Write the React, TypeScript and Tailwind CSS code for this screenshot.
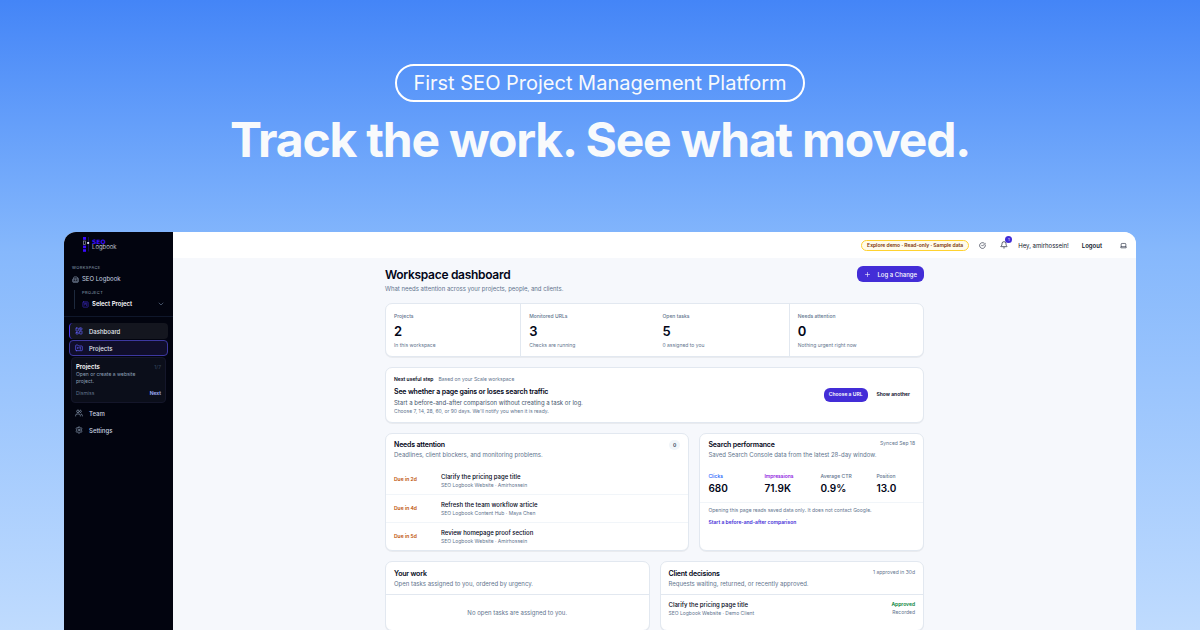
import React from 'react';
import {
  Bell,
  Building2,
  ChevronDown,
  CircleCheckBig,
  FolderKanban,
  Laptop,
  LayoutDashboard,
  Plus,
  Settings,
  SquareKanban,
  Users,
} from 'lucide-react';
import { clsx } from 'clsx';

const stats = [
  { label: 'Projects', value: '2', note: 'In this workspace', divider: false },
  { label: 'Monitored URLs', value: '3', note: 'Checks are running', divider: true },
  { label: 'Open tasks', value: '5', note: '0 assigned to you', divider: false },
  { label: 'Needs attention', value: '0', note: 'Nothing urgent right now', divider: true },
];

const attention = [
  { due: 'Due in 2d', title: 'Clarify the pricing page title', meta: 'SEO Logbook Website · Amirhossein' },
  { due: 'Due in 4d', title: 'Refresh the team workflow article', meta: 'SEO Logbook Content Hub · Maya Chen' },
  { due: 'Due in 5d', title: 'Review homepage proof section', meta: 'SEO Logbook Website · Amirhossein' },
];

const metrics = [
  { label: 'Clicks', value: '680', color: 'text-blue-600' },
  { label: 'Impressions', value: '71.9K', color: 'text-purple-700' },
  { label: 'Average CTR', value: '0.9%', color: 'text-slate-500' },
  { label: 'Position', value: '13.0', color: 'text-slate-500' },
];

function Card({ className, children }: { className?: string; children: React.ReactNode }) {
  return (
    <section className={clsx('min-w-0 rounded-[7px] border border-slate-200 bg-white shadow-2xs', className)}>
      {children}
    </section>
  );
}

function CardHeading({ title, text }: { title: string; text: string }) {
  return (
    <div>
      <h2 className="text-[7px] leading-[10px] font-semibold tracking-tight text-slate-950">{title}</h2>
      <p className="text-[6px] leading-[10px] whitespace-nowrap text-slate-500">{text}</p>
    </div>
  );
}

function Logo() {
  return (
    <a href="#" className="ml-[10px] flex items-center gap-[2px]">
      <svg viewBox="0 0 8 15" className="h-[15px] w-[8px]" fill="#3a0bff">
        <rect x="1" y="0" width="3" height="2.8" />
        <rect x="1.4" y="4" width="2.2" height="3.6" fill="none" stroke="#8b8fa3" strokeWidth="0.7" />
        <rect x="1" y="8.6" width="3" height="2.6" />
        <rect x="1" y="12.2" width="3" height="2.6" />
        <rect x="6" y="0" width="0.8" height="14.4" fill="#1d1468" />
        <rect x="5.2" y="5" width="1.9" height="1.9" fill="#e2e8f0" />
      </svg>
      <span className="flex flex-col">
        <span className="font-['DejaVu_Sans',sans-serif] text-[6px] leading-[5px] font-bold text-[#3a0bff]">SEO</span>
        <span className="text-[6px] leading-[6px] font-light text-slate-200">Logbook</span>
      </span>
    </a>
  );
}

function Sidebar() {
  return (
    <aside className="w-[109px] shrink-0 bg-[#02040f] pt-[5px] text-[6px] text-slate-300">
      <div className="px-2">
        <Logo />
        <p className="mt-[13px] text-[4px] leading-[6px] tracking-widest text-slate-400">WORKSPACE</p>
        <div className="mt-1 flex items-center gap-[3px] leading-[8px]">
          <Building2 className="size-[7px] text-slate-400" />
          SEO Logbook
        </div>
        <div className="mt-[7px] ml-[2px] border-l border-slate-800 pl-[7px]">
          <p className="text-[4px] leading-[6px] tracking-widest text-slate-400">PROJECT</p>
          <button className="mt-[3px] flex w-full items-center gap-[3px] leading-[10px] font-semibold text-white">
            <SquareKanban className="size-[7px] text-indigo-700" />
            Select Project
            <ChevronDown className="ml-auto size-[8px] text-slate-500" />
          </button>
        </div>
      </div>

      <nav className="mt-[7px] border-t border-slate-900 px-[5px] pt-[6px] font-medium">
        <a href="#" className="flex h-4 items-center gap-[6px] rounded-[4px] border-l border-indigo-600 bg-[#14161f] pl-[5px] text-slate-200">
          <LayoutDashboard className="size-2 text-indigo-500" />
          Dashboard
        </a>
        <a href="#" className="mt-px flex h-4 items-center gap-[6px] rounded-[4px] border border-[#3d38a0] bg-[#100e2b] pl-[5px] text-slate-200">
          <FolderKanban className="size-2 text-indigo-500" />
          Projects
        </a>
        <div className="mx-[2px] mt-px rounded-[4px] border border-[#14162a] bg-[#0b0e1a] px-1 pt-[5px] pb-1">
          <div className="flex justify-between leading-[8px]">
            <strong className="font-semibold text-white">Projects</strong>
            <span className="text-[5px] text-slate-700">1/7</span>
          </div>
          <p className="text-[5px] leading-[7px] font-normal text-slate-400">
            Open or create a website
            <br />
            project.
          </p>
          <div className="mt-1 flex justify-between text-[5px] leading-[9px]">
            <button className="font-normal text-slate-500">Dismiss</button>
            <button className="font-semibold text-indigo-300">Next</button>
          </div>
        </div>
        <a href="#" className="mt-[2px] flex h-4 items-center gap-[6px] pl-[6px]">
          <Users className="size-2 text-slate-400" />
          Team
        </a>
        <a href="#" className="mt-px flex h-4 items-center gap-[6px] pl-[6px]">
          <Settings className="size-2 text-slate-400" />
          Settings
        </a>
      </nav>
    </aside>
  );
}

function TopBar() {
  return (
    <header className="flex h-[26px] items-center justify-end bg-white pr-[9px] text-[6px] text-slate-900">
      <span className="rounded-full border border-amber-300 bg-amber-50 px-[5px] text-[5px] leading-[9px] font-semibold text-amber-900">
        Explore demo · Read-only · Sample data
      </span>
      <button aria-label="Checks" className="ml-[10px]">
        <CircleCheckBig className="size-[7px]" />
      </button>
      <button aria-label="Notifications" className="relative ml-[14px]">
        <Bell className="size-[8px]" />
        <span className="absolute -top-[5px] left-[5px] size-[7px] rounded-full bg-indigo-700 text-center text-[4px] leading-[7px] text-white">
          1
        </span>
      </button>
      <span className="ml-[10px]">Hey, amirhossein!</span>
      <button className="ml-[13px] font-semibold">Logout</button>
      <button aria-label="Device theme" className="ml-[18px]">
        <Laptop className="size-[7px]" />
      </button>
    </header>
  );
}

function Dashboard() {
  return (
    <main className="mx-auto w-full max-w-[539px] pt-2">
      <div className="flex items-start justify-between">
        <div>
          <h1 className="text-[12px] leading-[18px] font-semibold tracking-tight text-slate-950">
            Workspace dashboard
          </h1>
          <p className="text-[6px] leading-[10px] text-slate-500">
            What needs attention across your projects, people, and clients.
          </p>
        </div>
        <button className="flex h-4 items-center gap-[6px] rounded-[6px] bg-indigo-700 px-[7px] text-[6px] font-medium text-white">
          <Plus className="size-[7px]" />
          Log a Change
        </button>
      </div>

      <Card className="mt-[9px] grid grid-cols-4">
        {stats.map((s) => (
          <div key={s.label} className={clsx('p-2', s.divider && 'border-l border-slate-200')}>
            <p className="text-[5px] leading-[8px] font-medium text-slate-500">{s.label}</p>
            <p className="text-[13px] leading-[22px] font-semibold text-slate-950">{s.value}</p>
            <p className="text-[5px] leading-[6px] text-slate-500">{s.note}</p>
          </div>
        ))}
      </Card>

      <Card className="mt-[10px] flex items-center justify-between py-[6px] pr-[13px] pl-2">
        <div>
          <p className="flex gap-[5px] text-[5px] leading-[10px] text-slate-500">
            <strong className="font-semibold text-slate-950">Next useful step</strong>
            Based on your Scale workspace
          </p>
          <h2 className="mt-[3px] text-[7px] leading-[10px] font-semibold tracking-tight text-slate-950">
            See whether a page gains or loses search traffic
          </h2>
          <p className="mt-px text-[6px] leading-[9px] text-slate-600">
            Start a before-and-after comparison without creating a task or log.
          </p>
          <p className="text-[5px] leading-[9px] text-slate-500">
            Choose 7, 14, 28, 60, or 90 days. We'll notify you when it is ready.
          </p>
        </div>
        <div className="flex items-center gap-[9px] text-[5px] font-semibold">
          <button className="h-[14px] rounded-[6px] bg-indigo-700 px-[5px] text-white">Choose a URL</button>
          <button className="text-slate-950">Show another</button>
        </div>
      </Card>

      <div className="mt-[10px] grid grid-cols-[305fr_225fr] gap-[10px]">
        <Card>
          <div className="flex items-start justify-between px-2 py-[6px]">
            <CardHeading title="Needs attention" text="Deadlines, client blockers, and monitoring problems." />
            <span className="rounded-full bg-slate-100 px-1 text-[5px] leading-[10px] font-semibold text-slate-700">0</span>
          </div>
          <ul>
            {attention.map((item, i) => (
              <li key={item.title} className={clsx('flex h-7 items-center px-2', i > 0 && 'border-t border-slate-100')}>
                <span className="w-[47px] text-[5px] font-semibold text-amber-700">{item.due}</span>
                <div>
                  <p className="text-[6px] leading-[9px] font-medium text-slate-950">{item.title}</p>
                  <p className="text-[5px] leading-[8px] text-slate-500">{item.meta}</p>
                </div>
              </li>
            ))}
          </ul>
        </Card>

        <Card>
          <div className="flex items-start justify-between px-2 pt-[6px]">
            <CardHeading title="Search performance" text="Saved Search Console data from the latest 28-day window." />
            <span className="-ml-10 text-[5px] leading-[7px] whitespace-nowrap text-slate-500">Synced Sep 18</span>
          </div>
          <dl className="mt-3 grid grid-cols-[56px_56px_56px_auto] pb-[6px] pl-2">
            {metrics.map((m) => (
              <div key={m.label}>
                <dt className={clsx('text-[5px] leading-[8px] font-medium', m.color)}>{m.label}</dt>
                <dd className="text-[10px] leading-4 font-semibold text-slate-950">{m.value}</dd>
              </div>
            ))}
          </dl>
          <div className="border-t border-slate-100 px-2 pt-[3px] text-[5px]">
            <p className="leading-[9px] text-slate-500">
              Opening this page reads saved data only. It does not contact Google.
            </p>
            <a href="#" className="mt-[3px] block leading-[9px] font-semibold text-indigo-700">
              Start a before-and-after comparison
            </a>
          </div>
        </Card>
      </div>

      <div className="mt-[10px] grid grid-cols-2 gap-[10px]">
        <Card>
          <div className="border-b border-slate-200 px-2 pt-[7px] pb-[5px]">
            <CardHeading title="Your work" text="Open tasks assigned to you, ordered by urgency." />
          </div>
          <p className="py-3 text-center text-[6px] leading-[11px] text-slate-500">
            No open tasks are assigned to you.
          </p>
        </Card>
        <Card>
          <div className="flex items-start justify-between border-b border-slate-200 px-2 pt-[7px] pb-[5px]">
            <CardHeading title="Client decisions" text="Requests waiting, returned, or recently approved." />
            <span className="text-[5px] leading-[6px] text-slate-500">1 approved in 30d</span>
          </div>
          <div className="flex justify-between px-2 pt-[5px]">
            <div>
              <p className="text-[6px] leading-[9px] font-medium text-slate-950">Clarify the pricing page title</p>
              <p className="text-[5px] leading-[8px] text-slate-500">SEO Logbook Website · Demo Client</p>
            </div>
            <div className="text-right text-[5px]">
              <p className="leading-[9px] font-semibold text-green-700">Approved</p>
              <p className="leading-[7px] text-slate-500">Recorded</p>
            </div>
          </div>
        </Card>
      </div>
    </main>
  );
}

export default function App() {
  return (
    <div className="flex h-screen flex-col overflow-hidden bg-linear-to-b from-[#4485f7] via-[#86b8fc] via-40% to-[#bfdbfe] px-16 font-['Inter',sans-serif]">
      <div className="flex flex-col items-center pt-16 text-slate-50">
        <p className="rounded-full border-2 border-white px-4 text-[20px] leading-[34px] font-normal">
          First SEO Project Management Platform
        </p>
        <h1 className="mt-2 text-[48px] leading-[60px] font-bold tracking-tight [font-variation-settings:'opsz'_14]">
          Track the work. See what moved.
        </h1>
      </div>

      <div className="mt-[62px] flex min-h-0 flex-1 overflow-hidden rounded-t-xl bg-[#f6f8fc]">
        <Sidebar />
        <div className="min-w-0 flex-1">
          <TopBar />
          <Dashboard />
        </div>
      </div>
    </div>
  );
}
